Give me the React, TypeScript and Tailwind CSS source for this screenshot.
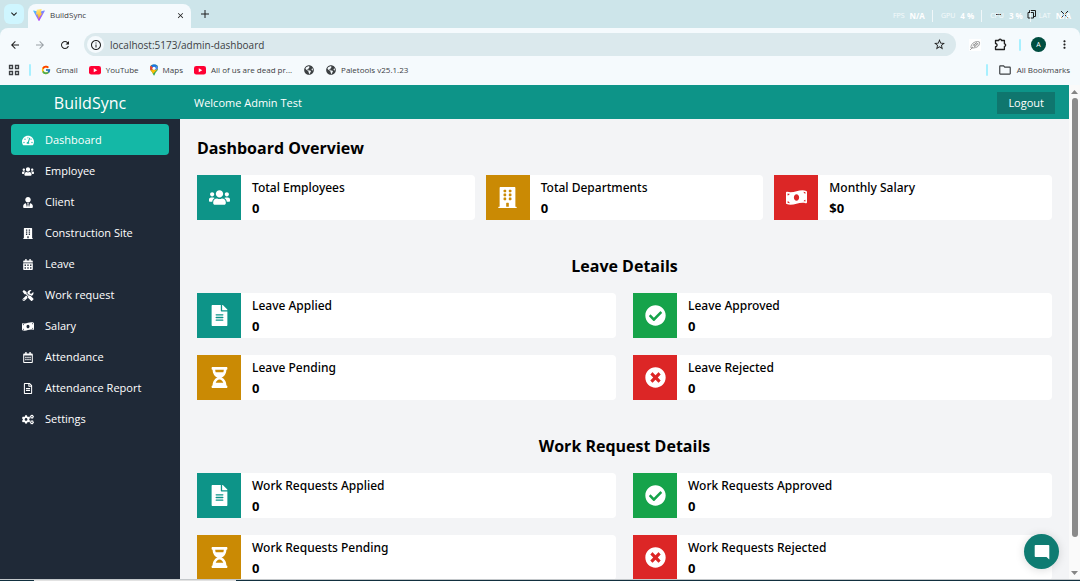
import type { ReactNode } from "react"
import type { IconType } from "react-icons"
import {
  FaBuilding,
  FaCalendarAlt,
  FaCheckCircle,
  FaCogs,
  FaFileAlt,
  FaGlobeAmericas,
  FaHourglassHalf,
  FaMoneyBillWave,
  FaRegCalendarAlt,
  FaRegFileAlt,
  FaTachometerAlt,
  FaTimesCircle,
  FaTools,
  FaUsers,
  FaUserTie,
} from "react-icons/fa"
import { FcGoogle } from "react-icons/fc"
import {
  MdArrowBack,
  MdArrowForward,
  MdClose,
  MdInfoOutline,
  MdKeyboardArrowDown,
  MdMoreVert,
  MdOutlineFolder,
  MdRefresh,
  MdStarBorder,
} from "react-icons/md"

const NAV: { label: string; icon: IconType; active?: boolean }[] = [
  { label: "Dashboard", icon: FaTachometerAlt, active: true },
  { label: "Employee", icon: FaUsers },
  { label: "Client", icon: FaUserTie },
  { label: "Construction Site", icon: FaBuilding },
  { label: "Leave", icon: FaCalendarAlt },
  { label: "Work request", icon: FaTools },
  { label: "Salary", icon: FaMoneyBillWave },
  { label: "Attendance", icon: FaRegCalendarAlt },
  { label: "Attendance Report", icon: FaRegFileAlt },
  { label: "Settings", icon: FaCogs },
]

type Card = { title: string; value: string; icon: IconType; color: string }

const OVERVIEW: Card[] = [
  { title: "Total Employees", value: "0", icon: FaUsers, color: "bg-[#0d9488]" },
  { title: "Total Departments", value: "0", icon: FaBuilding, color: "bg-[#ca8a04]" },
  { title: "Monthly Salary", value: "$0", icon: FaMoneyBillWave, color: "bg-[#dc2626]" },
]

const LEAVES: Card[] = [
  { title: "Leave Applied", value: "0", icon: FaFileAlt, color: "bg-[#0d9488]" },
  { title: "Leave Approved", value: "0", icon: FaCheckCircle, color: "bg-[#16a34a]" },
  { title: "Leave Pending", value: "0", icon: FaHourglassHalf, color: "bg-[#ca8a04]" },
  { title: "Leave Rejected", value: "0", icon: FaTimesCircle, color: "bg-[#dc2626]" },
]

const REQUESTS: Card[] = [
  { title: "Work Requests Applied", value: "0", icon: FaFileAlt, color: "bg-[#0d9488]" },
  { title: "Work Requests Approved", value: "0", icon: FaCheckCircle, color: "bg-[#16a34a]" },
  { title: "Work Requests Pending", value: "0", icon: FaHourglassHalf, color: "bg-[#ca8a04]" },
  { title: "Work Requests Rejected", value: "0", icon: FaTimesCircle, color: "bg-[#dc2626]" },
]

const STATS = [
  { name: "FPS", value: "N/A" },
  { name: "GPU", value: "4 %" },
  { name: "CPU", value: "3 %" },
  { name: "LAT", value: "N/A" },
]

function ViteLogo() {
  return (
    <svg className="size-3 shrink-0" viewBox="0 0 32 32">
      <defs>
        <linearGradient id="vite-a" x1="0" y1="0" x2="0.6" y2="1">
          <stop offset="0" stopColor="#41d1ff" />
          <stop offset="1" stopColor="#bd34fe" />
        </linearGradient>
        <linearGradient id="vite-b" x1="0.4" y1="0" x2="0.6" y2="1">
          <stop offset="0" stopColor="#ffea83" />
          <stop offset="1" stopColor="#ffa800" />
        </linearGradient>
      </defs>
      <path d="M31 6 17 31a1 1 0 0 1-2 0L1 6a1 1 0 0 1 1-2l14 3 14-3a1 1 0 0 1 1 2Z" fill="url(#vite-a)" />
      <path d="m23 0-13 2-2 13 5-1-1 6 3-1-2 9 12-17-4 1Z" fill="url(#vite-b)" />
    </svg>
  )
}

function YouTubeLogo() {
  return (
    <svg className="w-3 h-3 shrink-0" viewBox="0 0 24 24">
      <rect x="0" y="4" width="24" height="17" rx="4.5" fill="#ff0033" />
      <path d="M9.5 8.5v8l7-4Z" fill="#fff" />
    </svg>
  )
}

function MapsLogo() {
  return (
    <svg className="w-2 h-3 shrink-0" viewBox="0 0 16 23">
      <clipPath id="pin">
        <path d="M8 0a8 8 0 0 0-8 8c0 5 5 7 6.500 12.500C7 22.500 7.500 23 8 23s1-.5 1.500-2.500C11 15 16 13 16 8a8 8 0 0 0-8-8Z" />
      </clipPath>
      <g clipPath="url(#pin)">
        <path d="M0 0h16v23H0z" fill="#34a853" />
        <path d="M8 8 16 0v9L3 22-2 14Z" fill="#fbbc04" />
        <path d="M8 8 17-1v8L9 23h9V6Z" fill="#34a853" />
        <path d="M8 8 0 14-3 3l5-1Z" fill="#ea4335" />
        <path d="M2 3 8 8l7-7L8-2Z" fill="#1a73e8" />
        <path d="m8 8 7-6 3 5-7 5Z" fill="#4285f4" />
      </g>
      <circle cx="8" cy="8" r="3" fill="#fff" />
    </svg>
  )
}

function ChromeButton({ label, className = "", children }: { label: string; className?: string; children: ReactNode }) {
  return (
    <button aria-label={label} className={`flex shrink-0 items-center justify-center ${className}`}>
      {children}
    </button>
  )
}

function Bookmark({ icon, label }: { icon: ReactNode; label?: string }) {
  return (
    <a href="#" aria-label={label ?? "Bookmark"} className="flex items-center gap-[5px] whitespace-nowrap">
      {icon}
      {label && <span>{label}</span>}
    </a>
  )
}

function BrowserChrome() {
  return (
    <div className="shrink-0 bg-[#cde5ea] text-[#3c4043]">
      {/* Tab strip */}
      <div className="relative flex h-7 items-end">
        <ChromeButton label="Search tabs" className="mb-1 ml-1 size-5 rounded-md bg-[#cff6ff] text-[#1f1f1f]">
          <MdKeyboardArrowDown className="size-3" />
        </ChromeButton>
        <div className="ml-1 flex h-6 w-[163px] items-center rounded-t-lg bg-[#f5fafd] pr-[5px] pb-0.5 pl-[5px]">
          <ViteLogo />
          <span className="ml-[5px] flex-1 text-[8px] leading-3">BuildSync</span>
          <ChromeButton label="Close tab" className="size-3 text-[#1f1f1f]">
            <MdClose className="size-[9px]" />
          </ChromeButton>
        </div>
        <ChromeButton label="New tab" className="mb-2 ml-2 size-3 text-[#1f1f1f]">
          <svg className="size-2" viewBox="0 0 8 8" stroke="currentColor">
            <path d="M4 0v8M0 4h8" />
          </svg>
        </ChromeButton>
        <div className="ml-auto flex items-center gap-6 self-center pr-[11px] text-[#1f1f1f]">
          <ChromeButton label="Minimize">
            <svg className="size-[9px]" viewBox="0 0 9 9" stroke="currentColor">
              <path d="M2 4.500h5" />
            </svg>
          </ChromeButton>
          <ChromeButton label="Restore">
            <svg className="size-[9px]" viewBox="0 0 9 9" fill="none" stroke="currentColor">
              <path d="M1 2.500h5.500V8H1ZM2.500 2.500v-2h6v6h-2" />
            </svg>
          </ChromeButton>
          <ChromeButton label="Close">
            <svg className="size-[9px]" viewBox="0 0 9 9" stroke="currentColor">
              <path d="m1 1 7 7M8 1 1 8" />
            </svg>
          </ChromeButton>
        </div>
        {/* Hardware monitor overlay */}
        <div className="pointer-events-none absolute top-2.5 right-[9px] flex text-[7px] leading-3 text-white/80">
          {STATS.map((s, i) => (
            <div key={s.name} className={`flex gap-[5px] ${i > 0 ? "ml-[7px] border-l border-white/70 pl-2" : ""}`}>
              <span>{s.name}</span>
              <b className="text-[8px] text-white">{s.value}</b>
            </div>
          ))}
        </div>
      </div>

      {/* Toolbar */}
      <div className="flex h-[33px] items-center rounded-t-lg bg-[#f5fafd] px-[9px]">
        <ChromeButton label="Back" className="size-3 text-[#1f1f1f]">
          <MdArrowBack className="size-3" />
        </ChromeButton>
        <ChromeButton label="Forward" className="ml-[13px] size-3 text-[#9aa0a6]">
          <MdArrowForward className="size-3" />
        </ChromeButton>
        <ChromeButton label="Reload" className="ml-[13px] size-3 text-[#1f1f1f]">
          <MdRefresh className="size-3" />
        </ChromeButton>
        <div className="ml-[13px] flex h-[23px] flex-1 items-center rounded-full bg-[#dbe9ed] pr-2.5 pl-[3px]">
          <ChromeButton label="Site information" className="size-[17px] rounded-full bg-[#f5fafd] text-[#1f1f1f]">
            <MdInfoOutline className="size-3" />
          </ChromeButton>
          <input
            aria-label="Address"
            defaultValue="localhost:5173/admin-dashboard"
            className="ml-[6px] min-w-0 flex-1 bg-transparent text-[10px] leading-4 outline-none"
          />
          <ChromeButton label="Bookmark this tab" className="text-[#1f1f1f]">
            <MdStarBorder className="size-[13px]" />
          </ChromeButton>
        </div>
        <ChromeButton label="Pencil extension" className="ml-[13px] size-3 bg-white text-[#8a8a8a]">
          <svg className="size-3" viewBox="0 0 12 12" fill="none" stroke="currentColor" strokeWidth="0.8">
            <path d="M2 9c-.5-2 1-5 4-6 2-.8 4-.5 4.500 0 .4 2-.5 4-2.500 5C6 9 4 9 2 9ZM1 11l3-3M4.500 5l2 2.500M6 4l2 2.500M7.500 3.500l1.500 2M3.500 7 8 3.500M5 8l4.500-4" />
          </svg>
        </ChromeButton>
        <ChromeButton label="Extensions" className="ml-[13px] text-[#1f1f1f]">
          <svg className="size-[13px]" viewBox="0 0 13 13" fill="none" stroke="currentColor" strokeWidth="1.3" strokeLinejoin="round">
            <path d="M1.500 2.500h3.300a1.300 1.300 0 0 1 2.600 0h3v3.300a1.300 1.300 0 0 1 0 2.600v3.100H1.500V8.700a1.600 1.600 0 0 0 0-3.200Z" />
          </svg>
        </ChromeButton>
        <span className="ml-3 h-3 w-0.5 rounded bg-[#a8f0ff]" />
        <ChromeButton label="Profile" className="ml-2.5 size-[15px] rounded-full bg-[#004d40] text-[7px] leading-3 text-white">
          A
        </ChromeButton>
        <ChromeButton label="Menu" className="ml-3 text-[#1f1f1f]">
          <MdMoreVert className="size-[13px]" />
        </ChromeButton>
      </div>

      {/* Bookmarks bar */}
      <div className="flex h-6 items-center bg-[#f5fafd] pr-2.5 pb-[6px] pl-2 text-[8px] leading-3">
        <ChromeButton label="Apps" className="text-[#3c4043]">
          <svg className="size-3" viewBox="0 0 12 12" fill="none" stroke="currentColor" strokeWidth="1.3">
            <path d="M1.500 1.500h3v3h-3ZM7.500 1.500h3v3h-3ZM1.500 7.500h3v3h-3ZM7.500 7.500h3v3h-3Z" />
          </svg>
        </ChromeButton>
        <span className="mr-2.5 ml-[9px] h-3 w-0.5 rounded bg-[#a8f0ff]" />
        <div className="flex items-center gap-[11px]">
          <Bookmark icon={<FcGoogle className="size-[10px]" />} label="Gmail" />
          <Bookmark icon={<YouTubeLogo />} label="YouTube" />
          <Bookmark icon={<MapsLogo />} label="Maps" />
          <Bookmark icon={<YouTubeLogo />} label="All of us are dead pr..." />
          <Bookmark icon={<FaGlobeAmericas className="mx-px size-[10px]" />} />
          <Bookmark icon={<FaGlobeAmericas className="size-[10px]" />} label="Paletools v25.1.23" />
        </div>
        <span className="mr-2.5 ml-auto h-3 w-0.5 rounded bg-[#a8f0ff]" />
        <Bookmark icon={<MdOutlineFolder className="size-[14px]" />} label="All Bookmarks" />
      </div>
    </div>
  )
}

function SummaryCard({ card }: { card: Card }) {
  const Icon = card.icon
  return (
    <div className="flex h-[45px] overflow-hidden rounded-r-sm bg-white">
      <div className={`flex w-11 shrink-0 items-center justify-center text-white ${card.color}`}>
        <Icon className="size-[21px]" />
      </div>
      <div className="pt-[3px] pl-[11px]">
        <p className="font-['Noto_Sans',sans-serif] text-[12px] leading-5 font-medium">{card.title}</p>
        <p className="text-[13px] leading-5 font-bold">{card.value}</p>
      </div>
    </div>
  )
}

function DetailSection({ title, cards }: { title: string; cards: Card[] }) {
  return (
    <section className="mt-[34px]">
      <h2 className="mb-[15px] text-center text-[16px] leading-6 font-bold">{title}</h2>
      <div className="grid grid-cols-2 gap-[17px]">
        {cards.map((card) => (
          <SummaryCard key={card.title} card={card} />
        ))}
      </div>
    </section>
  )
}

export default function App() {
  return (
    <div className="flex h-screen flex-col overflow-hidden bg-[#f3f4f6] font-['Open_Sans',sans-serif] text-black">
      <BrowserChrome />

      <div className="relative flex min-h-0 flex-1">
        <div className="flex min-w-0 flex-1 flex-col">
          {/* Header */}
          <header className="flex h-[34px] shrink-0 items-center bg-[#0d9488] pt-0.5 text-white">
            <div className="w-[180px] shrink-0 text-center text-[16px] leading-6">BuildSync</div>
            <p className="flex-1 pl-[14px] text-[11px] leading-4">Welcome Admin Test</p>
            <button className="mr-[14px] bg-[#0f766e] px-[11px] py-[3px] text-[11px] leading-4">Logout</button>
          </header>

          <div className="flex min-h-0 flex-1">
            <nav className="w-[180px] shrink-0 bg-[#1f2937] px-[11px] pt-[5px] text-white">
              {NAV.map(({ label, icon: Icon, active }) => (
                <a
                  key={label}
                  href="#"
                  className={`flex h-[31px] items-center gap-[11px] rounded-sm pt-px pl-[11px] text-[11px] leading-4 ${
                    active ? "bg-[#14b8a6]" : ""
                  }`}
                >
                  <Icon className="h-[11px] w-3 shrink-0" />
                  <span>{label}</span>
                </a>
              ))}
            </nav>

            <main className="min-w-0 flex-1 overflow-hidden p-[17px]">
              <h1 className="mb-[15px] text-[16px] leading-6 font-bold">Dashboard Overview</h1>
              <div className="grid grid-cols-3 gap-[11px]">
                {OVERVIEW.map((card) => (
                  <SummaryCard key={card.title} card={card} />
                ))}
              </div>
              <DetailSection title="Leave Details" cards={LEAVES} />
              <DetailSection title="Work Request Details" cards={REQUESTS} />
            </main>
          </div>
        </div>

        {/* Scrollbar */}
        <div className="flex w-[11px] shrink-0 flex-col items-center bg-[#fafafa] pt-[5px] pb-1">
          <svg className="h-1 w-[7px]" viewBox="0 0 7 4" fill="#858585">
            <path d="M0 4h7L3.500 0Z" />
          </svg>
          <div className="mt-1 mb-[34px] w-1.5 flex-1 rounded-full bg-[#8a8a8a]" />
          <svg className="h-1 w-[7px]" viewBox="0 0 7 4" fill="#858585">
            <path d="M0 0h7L3.500 4Z" />
          </svg>
        </div>

        {/* Chat launcher */}
        <button
          aria-label="Open chat"
          className="absolute right-[21px] bottom-[10px] flex size-[35px] items-center justify-center rounded-full bg-[#0f7c72] shadow-[0_1px_10px_rgba(0,0,0,0.15)]"
        >
          <svg className="size-4" viewBox="0 0 16 16" fill="#fff">
            <path d="M1.500 1h13a1 1 0 0 1 .8.800V15.500L12.500 13H1.500a1 1 0 0 1-.8-.8V1.800A1 1 0 0 1 1.500 1Z" />
          </svg>
        </button>
      </div>

      {/* Top edge of the taskbar */}
      <div className="flex h-0.5 shrink-0 border-t border-[#c4c8cb] bg-[#12303f]">
        <div className="ml-[34px] w-[202px] bg-[#e2e2e2]" />
      </div>
    </div>
  )
}
